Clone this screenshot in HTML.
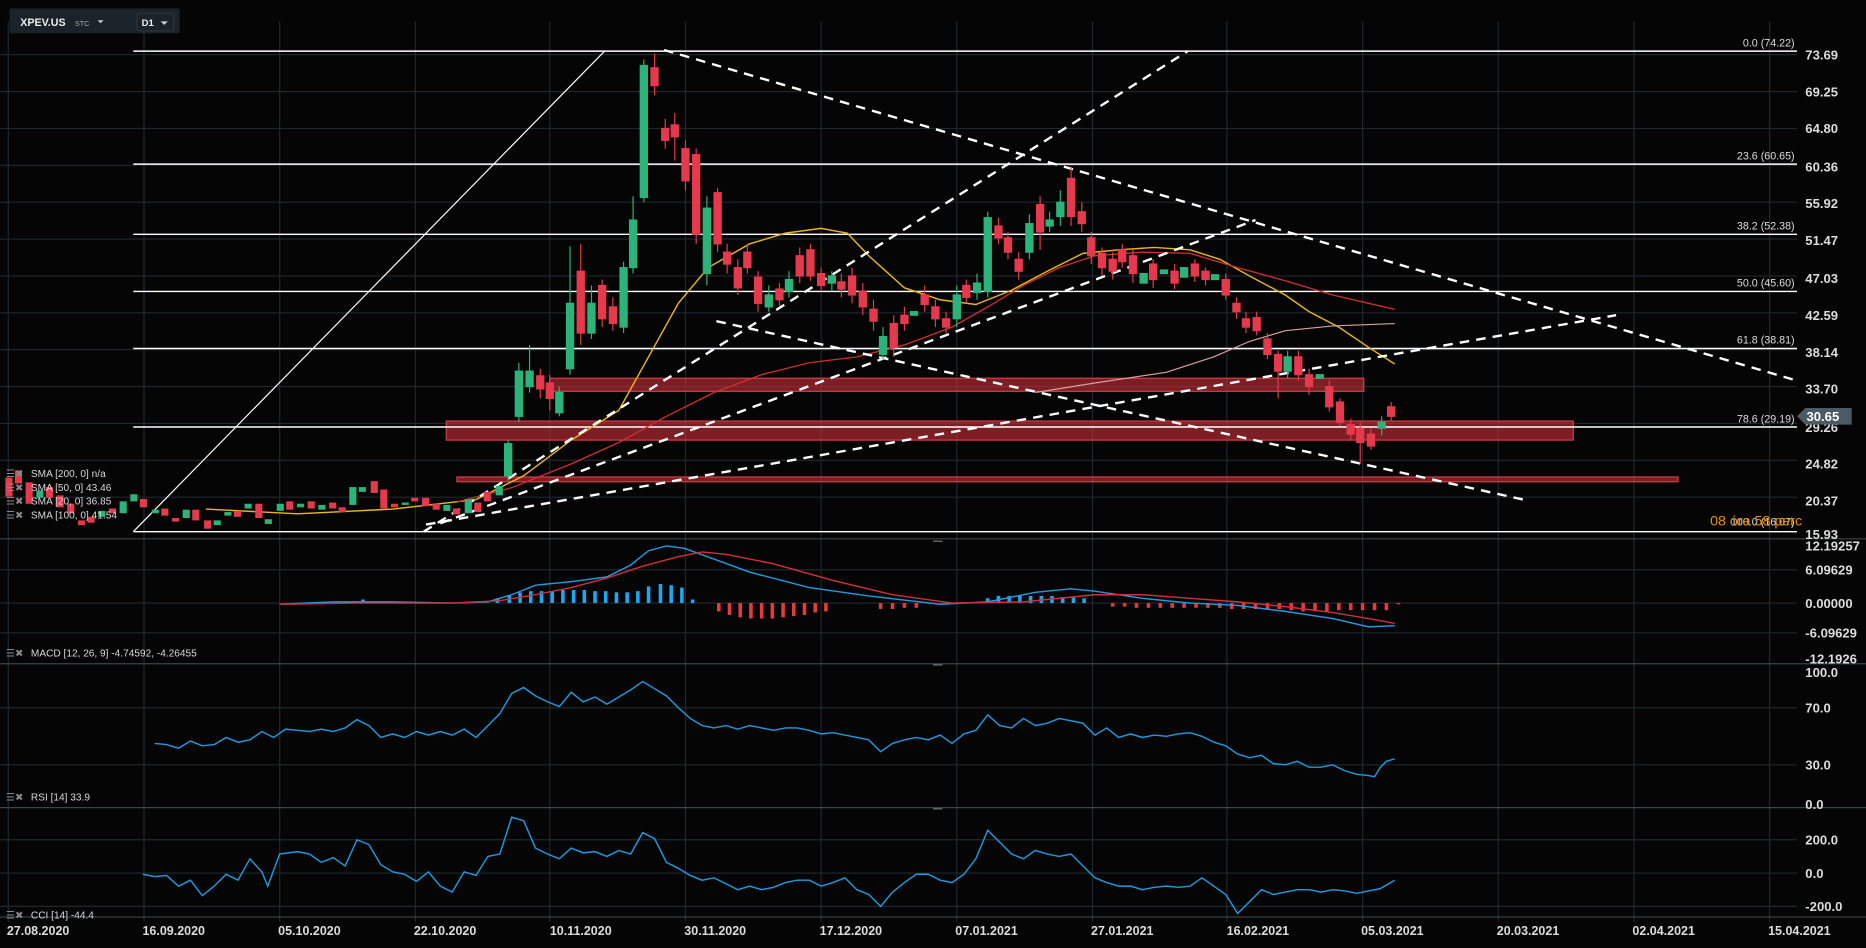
<!DOCTYPE html>
<html><head><meta charset="utf-8"><style>
html,body{margin:0;padding:0;background:#050505;overflow:hidden}
svg{display:block}
text{font-family:"Liberation Sans",sans-serif}
</style></head><body>
<svg width="1866" height="948" viewBox="0 0 1568 797" preserveAspectRatio="none" xmlns="http://www.w3.org/2000/svg">
<rect width="1568" height="797" fill="#050505"/>
<!-- grid -->
<g stroke="#1f282e" stroke-width="1">
<line x1="7" y1="18" x2="7" y2="775"/><line x1="121" y1="18" x2="121" y2="775"/><line x1="235" y1="18" x2="235" y2="775"/><line x1="349" y1="18" x2="349" y2="775"/><line x1="462" y1="18" x2="462" y2="775"/><line x1="576" y1="18" x2="576" y2="775"/><line x1="690" y1="18" x2="690" y2="775"/><line x1="804" y1="18" x2="804" y2="775"/><line x1="918" y1="18" x2="918" y2="775"/><line x1="1031" y1="18" x2="1031" y2="775"/><line x1="1145" y1="18" x2="1145" y2="775"/><line x1="1259" y1="18" x2="1259" y2="775"/><line x1="1373" y1="18" x2="1373" y2="775"/><line x1="1487" y1="18" x2="1487" y2="775"/>
<line x1="0" y1="46" x2="1510" y2="46"/><line x1="0" y1="77" x2="1510" y2="77"/><line x1="0" y1="108" x2="1510" y2="108"/><line x1="0" y1="139" x2="1510" y2="139"/><line x1="0" y1="170" x2="1510" y2="170"/><line x1="0" y1="201" x2="1510" y2="201"/><line x1="0" y1="232" x2="1510" y2="232"/><line x1="0" y1="263" x2="1510" y2="263"/><line x1="0" y1="294" x2="1510" y2="294"/><line x1="0" y1="325" x2="1510" y2="325"/><line x1="0" y1="356" x2="1510" y2="356"/><line x1="0" y1="387" x2="1510" y2="387"/><line x1="0" y1="418" x2="1510" y2="418"/>
<line x1="0" y1="479" x2="1510" y2="479"/><line x1="0" y1="507" x2="1510" y2="507"/><line x1="0" y1="532" x2="1510" y2="532"/>
<line x1="0" y1="595" x2="1510" y2="595"/><line x1="0" y1="643" x2="1510" y2="643"/>
<line x1="0" y1="706" x2="1510" y2="706"/><line x1="0" y1="734" x2="1510" y2="734"/><line x1="0" y1="762" x2="1510" y2="762"/>
</g>
<g stroke="#3a454c" stroke-width="1">
<line x1="0" y1="453" x2="1568" y2="453"/><line x1="0" y1="558" x2="1568" y2="558"/><line x1="0" y1="679" x2="1568" y2="679"/><line x1="0" y1="771" x2="1568" y2="771"/>
</g>
<!-- red zones -->
<g fill="rgba(190,45,55,0.65)" stroke="#d0404a" stroke-width="1">
<rect x="462" y="318" width="684" height="11"/>
<rect x="375" y="354" width="947" height="16"/>
<rect x="384" y="401" width="1026" height="4"/>
</g>
<!-- fib lines -->
<g stroke="#fff" stroke-width="1.2">
<line x1="112" y1="43" x2="1510" y2="43"/><line x1="112" y1="138" x2="1510" y2="138"/><line x1="112" y1="197" x2="1510" y2="197"/><line x1="112" y1="245" x2="1510" y2="245"/><line x1="112" y1="293" x2="1510" y2="293"/><line x1="112" y1="359" x2="1510" y2="359"/><line x1="112" y1="447" x2="1510" y2="447"/>
<line x1="112" y1="447" x2="508" y2="43" stroke-width="1"/>
</g>
<g fill="#ddd" font-size="9" text-anchor="end" font-family="DejaVu Sans,sans-serif">
<text x="1508" y="39">0.0 (74.22)</text><text x="1508" y="134">23.6 (60.65)</text><text x="1508" y="193">38.2 (52.38)</text><text x="1508" y="241">50.0 (45.60)</text><text x="1508" y="289">61.8 (38.81)</text><text x="1508" y="355">78.6 (29.19)</text><text x="1508" y="442">100.0 (16.07)</text>
</g>
<text x="1437" y="442" fill="#f08a00" font-size="12">08 óra 58 perc</text>
<!-- MAs -->
<polyline fill="none" stroke="#e8b420" stroke-width="1.2" points="173,428 250,432 330,428 400,420 440,400 480,370 520,345 545,300 570,255 595,225 630,205 660,196 690,192 712,196 730,215 760,242 790,252 820,256 850,244 880,228 910,213 940,210 970,208 1000,210 1025,218 1050,232 1080,248 1100,262 1125,275 1150,292 1172,306"/>
<polyline fill="none" stroke="#d02f2f" stroke-width="1.1" points="384,422 430,410 480,390 520,372 560,350 600,330 640,315 680,305 720,300 760,290 800,275 830,258 860,240 890,225 920,215 960,212 1000,213 1040,225 1080,236 1120,248 1150,255 1172,260"/>
<polyline fill="none" stroke="#d9a0a0" stroke-width="1" points="870,330 920,322 980,313 1020,300 1050,287 1080,278 1120,274 1172,272"/>
<!-- dashed lines -->
<g stroke="#fff" stroke-width="2" stroke-dasharray="8,6" fill="none">
<line x1="558" y1="42" x2="1510" y2="320"/>
<line x1="356" y1="447" x2="998" y2="43"/>
<line x1="358" y1="441" x2="1358" y2="265"/>
<line x1="370" y1="440" x2="1055" y2="185"/>
<line x1="602" y1="270" x2="1280" y2="420"/>
</g>
<!-- candles -->
<g stroke-width="1">
<g fill="#2bb37a" stroke="#2bb37a">
<rect x="31" y="413" width="5" height="5"/><rect x="83" y="430" width="5" height="4"/><rect x="101" y="422" width="5" height="9"/><rect x="110" y="416" width="5" height="5"/><rect x="128" y="429" width="5" height="2"/><rect x="154" y="429" width="5" height="6"/><rect x="180" y="438" width="5" height="3"/><rect x="189" y="431" width="5" height="2"/><rect x="206" y="424" width="5" height="3"/><rect x="223" y="437" width="5" height="3"/><rect x="233" y="424" width="5" height="5"/><rect x="250" y="424" width="5" height="2"/><rect x="268" y="425" width="5" height="3"/><rect x="294" y="410" width="5" height="14"/><rect x="302" y="410" width="5" height="3"/><rect x="338" y="423" width="5" height="1"/><rect x="373" y="425" width="5" height="4"/><rect x="391" y="420" width="5" height="11"/><rect x="417" y="409" width="5" height="7"/>
<line x1="427" y1="370" x2="427" y2="404"/><rect x="424" y="373" width="6" height="27"/>
<line x1="436" y1="305" x2="436" y2="355"/><rect x="433" y="312" width="6" height="38"/>
<line x1="445" y1="290" x2="445" y2="330"/><rect x="442" y="312" width="6" height="13"/>
<line x1="470" y1="325" x2="470" y2="350"/><rect x="467" y="330" width="6" height="17"/>
<line x1="479" y1="207" x2="479" y2="315"/><rect x="476" y="255" width="6" height="55"/>
<line x1="497" y1="240" x2="497" y2="285"/><rect x="494" y="255" width="6" height="25"/>
<line x1="524" y1="220" x2="524" y2="280"/><rect x="521" y="225" width="6" height="50"/>
<line x1="532" y1="165" x2="532" y2="230"/><rect x="529" y="185" width="6" height="40"/>
<line x1="541" y1="50" x2="541" y2="170"/><rect x="538" y="55" width="6" height="111"/>
<line x1="594" y1="165" x2="594" y2="240"/><rect x="591" y="175" width="6" height="55"/>
<line x1="646" y1="240" x2="646" y2="262"/><rect x="643" y="248" width="6" height="10"/>
<line x1="663" y1="228" x2="663" y2="250"/><rect x="660" y="235" width="6" height="10"/>
<line x1="699" y1="228" x2="699" y2="245"/><rect x="696" y="232" width="6" height="6"/>
<line x1="742" y1="275" x2="742" y2="302"/><rect x="739" y="283" width="6" height="15"/>
<rect x="765" y="262" width="6" height="3"/>
<line x1="804" y1="240" x2="804" y2="275"/><rect x="801" y="248" width="6" height="20"/>
<line x1="821" y1="230" x2="821" y2="252"/><rect x="818" y="238" width="6" height="8"/>
<line x1="830" y1="178" x2="830" y2="250"/><rect x="827" y="183" width="6" height="62"/>
<line x1="865" y1="180" x2="865" y2="218"/><rect x="862" y="188" width="6" height="24"/>
<line x1="882" y1="178" x2="882" y2="195"/><rect x="879" y="185" width="6" height="5"/>
<line x1="891" y1="160" x2="891" y2="190"/><rect x="888" y="170" width="6" height="12"/>
<rect x="958" y="230" width="6" height="8"/><rect x="975" y="227" width="6" height="3"/><rect x="992" y="225" width="6" height="8"/><rect x="1018" y="231" width="6" height="4"/>
<line x1="1082" y1="295" x2="1082" y2="318"/><rect x="1079" y="300" width="6" height="12"/>
<rect x="1106" y="315" width="6" height="3"/>
<line x1="1161" y1="350" x2="1161" y2="366"/><rect x="1158" y="355" width="6" height="5"/>
</g>
<g fill="#e5394d" stroke="#e5394d">
<rect x="5" y="402" width="5" height="15"/><rect x="13" y="396" width="5" height="10"/><rect x="22" y="406" width="5" height="17"/><rect x="39" y="410" width="5" height="8"/><rect x="48" y="417" width="5" height="9"/><rect x="57" y="424" width="5" height="7"/><rect x="66" y="438" width="5" height="3"/><rect x="74" y="435" width="5" height="4"/><rect x="92" y="428" width="5" height="3"/><rect x="118" y="420" width="5" height="6"/><rect x="136" y="428" width="5" height="5"/><rect x="145" y="436" width="5" height="2"/><rect x="162" y="429" width="5" height="8"/><rect x="172" y="438" width="5" height="6"/><rect x="197" y="430" width="5" height="4"/><rect x="215" y="424" width="5" height="11"/><rect x="241" y="422" width="5" height="6"/><rect x="259" y="422" width="5" height="5"/><rect x="277" y="423" width="5" height="4"/><rect x="285" y="427" width="5" height="3"/><rect x="312" y="405" width="5" height="9"/><rect x="320" y="412" width="5" height="15"/><rect x="329" y="424" width="5" height="2"/><rect x="346" y="419" width="5" height="2"/><rect x="355" y="419" width="5" height="6"/><rect x="364" y="424" width="5" height="4"/><rect x="381" y="428" width="5" height="4"/><rect x="399" y="423" width="5" height="7"/><rect x="407" y="414" width="5" height="7"/>
<line x1="454" y1="310" x2="454" y2="335"/><rect x="451" y="316" width="6" height="11"/>
<line x1="462" y1="315" x2="462" y2="345"/><rect x="459" y="322" width="6" height="13"/>
<line x1="488" y1="205" x2="488" y2="290"/><rect x="485" y="228" width="6" height="52"/>
<line x1="506" y1="235" x2="506" y2="275"/><rect x="503" y="240" width="6" height="28"/>
<line x1="515" y1="250" x2="515" y2="278"/><rect x="512" y="258" width="6" height="14"/>
<line x1="550" y1="45" x2="550" y2="80"/><rect x="547" y="57" width="6" height="15"/>
<line x1="559" y1="100" x2="559" y2="125"/><rect x="556" y="108" width="6" height="10"/>
<line x1="567" y1="95" x2="567" y2="135"/><rect x="564" y="105" width="6" height="10"/>
<line x1="576" y1="118" x2="576" y2="160"/><rect x="573" y="125" width="6" height="27"/>
<line x1="585" y1="125" x2="585" y2="205"/><rect x="582" y="130" width="6" height="67"/>
<line x1="603" y1="158" x2="603" y2="212"/><rect x="600" y="162" width="6" height="43"/>
<line x1="611" y1="205" x2="611" y2="230"/><rect x="608" y="212" width="6" height="10"/>
<line x1="620" y1="218" x2="620" y2="248"/><rect x="617" y="225" width="6" height="17"/>
<line x1="628" y1="205" x2="628" y2="230"/><rect x="625" y="212" width="6" height="13"/>
<line x1="637" y1="228" x2="637" y2="262"/><rect x="634" y="233" width="6" height="22"/>
<line x1="655" y1="238" x2="655" y2="258"/><rect x="652" y="243" width="6" height="9"/>
<line x1="672" y1="208" x2="672" y2="238"/><rect x="669" y="215" width="6" height="17"/>
<line x1="681" y1="205" x2="681" y2="236"/><rect x="678" y="210" width="6" height="22"/>
<line x1="690" y1="225" x2="690" y2="245"/><rect x="687" y="230" width="6" height="10"/>
<line x1="707" y1="230" x2="707" y2="250"/><rect x="704" y="237" width="6" height="6"/>
<line x1="716" y1="225" x2="716" y2="255"/><rect x="713" y="232" width="6" height="16"/>
<line x1="725" y1="238" x2="725" y2="265"/><rect x="722" y="245" width="6" height="13"/>
<line x1="734" y1="252" x2="734" y2="278"/><rect x="731" y="260" width="6" height="10"/>
<line x1="751" y1="265" x2="751" y2="300"/><rect x="748" y="272" width="6" height="20"/>
<line x1="760" y1="258" x2="760" y2="278"/><rect x="757" y="265" width="6" height="7"/>
<line x1="777" y1="240" x2="777" y2="262"/><rect x="774" y="248" width="6" height="8"/>
<line x1="786" y1="252" x2="786" y2="275"/><rect x="783" y="258" width="6" height="10"/>
<line x1="795" y1="262" x2="795" y2="280"/><rect x="792" y="268" width="6" height="7"/>
<line x1="812" y1="235" x2="812" y2="255"/><rect x="809" y="240" width="6" height="10"/>
<line x1="839" y1="183" x2="839" y2="205"/><rect x="836" y="190" width="6" height="10"/>
<line x1="847" y1="195" x2="847" y2="218"/><rect x="844" y="200" width="6" height="12"/>
<line x1="856" y1="212" x2="856" y2="235"/><rect x="853" y="218" width="6" height="10"/>
<line x1="874" y1="165" x2="874" y2="210"/><rect x="871" y="172" width="6" height="23"/>
<line x1="900" y1="140" x2="900" y2="190"/><rect x="897" y="150" width="6" height="32"/>
<line x1="909" y1="170" x2="909" y2="195"/><rect x="906" y="178" width="6" height="10"/>
<line x1="917" y1="195" x2="917" y2="222"/><rect x="914" y="200" width="6" height="15"/>
<line x1="926" y1="208" x2="926" y2="232"/><rect x="923" y="213" width="6" height="12"/>
<line x1="935" y1="212" x2="935" y2="235"/><rect x="932" y="218" width="6" height="10"/>
<line x1="943" y1="205" x2="943" y2="225"/><rect x="940" y="210" width="6" height="10"/>
<line x1="952" y1="210" x2="952" y2="238"/><rect x="949" y="215" width="6" height="15"/>
<line x1="969" y1="218" x2="969" y2="242"/><rect x="966" y="222" width="6" height="13"/>
<line x1="987" y1="222" x2="987" y2="243"/><rect x="984" y="228" width="6" height="10"/>
<line x1="1004" y1="218" x2="1004" y2="237"/><rect x="1001" y="222" width="6" height="10"/>
<line x1="1013" y1="225" x2="1013" y2="240"/><rect x="1010" y="228" width="6" height="7"/>
<line x1="1030" y1="230" x2="1030" y2="252"/><rect x="1027" y="235" width="6" height="13"/>
<line x1="1039" y1="250" x2="1039" y2="268"/><rect x="1036" y="255" width="6" height="7"/>
<line x1="1047" y1="262" x2="1047" y2="280"/><rect x="1044" y="268" width="6" height="7"/>
<line x1="1056" y1="262" x2="1056" y2="282"/><rect x="1053" y="267" width="6" height="11"/>
<line x1="1065" y1="280" x2="1065" y2="302"/><rect x="1062" y="285" width="6" height="13"/>
<line x1="1074" y1="295" x2="1074" y2="335"/><rect x="1071" y="298" width="6" height="14"/>
<line x1="1091" y1="295" x2="1091" y2="320"/><rect x="1088" y="300" width="6" height="15"/>
<line x1="1100" y1="310" x2="1100" y2="332"/><rect x="1097" y="315" width="6" height="10"/>
<line x1="1117" y1="320" x2="1117" y2="346"/><rect x="1114" y="325" width="6" height="17"/>
<line x1="1126" y1="335" x2="1126" y2="358"/><rect x="1123" y="338" width="6" height="17"/>
<line x1="1135" y1="352" x2="1135" y2="370"/><rect x="1132" y="357" width="6" height="8"/>
<line x1="1143" y1="355" x2="1143" y2="390"/><rect x="1140" y="360" width="6" height="12"/>
<line x1="1152" y1="360" x2="1152" y2="378"/><rect x="1149" y="365" width="6" height="10"/>
<line x1="1169" y1="338" x2="1169" y2="354"/><rect x="1166" y="342" width="6" height="8"/>
</g>
</g>
<!-- MACD -->
<g stroke="#1ea6f0" stroke-width="3">
<line x1="305" y1="507" x2="305" y2="504"/><line x1="418" y1="507" x2="418" y2="503"/><line x1="428" y1="507" x2="428" y2="501"/><line x1="437" y1="507" x2="437" y2="498"/><line x1="446" y1="507" x2="446" y2="497"/><line x1="455" y1="507" x2="455" y2="497"/><line x1="464" y1="507" x2="464" y2="497"/><line x1="473" y1="507" x2="473" y2="496"/><line x1="482" y1="507" x2="482" y2="496"/><line x1="491" y1="507" x2="491" y2="496"/><line x1="500" y1="507" x2="500" y2="497"/><line x1="509" y1="507" x2="509" y2="497"/><line x1="518" y1="507" x2="518" y2="498"/><line x1="527" y1="507" x2="527" y2="498"/><line x1="536" y1="507" x2="536" y2="497"/><line x1="545" y1="507" x2="545" y2="493"/><line x1="555" y1="507" x2="555" y2="491"/><line x1="564" y1="507" x2="564" y2="492"/><line x1="573" y1="507" x2="573" y2="494"/><line x1="582" y1="507" x2="582" y2="504"/>
<line x1="830" y1="507" x2="830" y2="503"/><line x1="839" y1="507" x2="839" y2="501"/><line x1="848" y1="507" x2="848" y2="501"/><line x1="857" y1="507" x2="857" y2="501"/><line x1="866" y1="507" x2="866" y2="501"/><line x1="875" y1="507" x2="875" y2="501"/><line x1="884" y1="507" x2="884" y2="501"/><line x1="893" y1="507" x2="893" y2="502"/><line x1="902" y1="507" x2="902" y2="502"/><line x1="911" y1="507" x2="911" y2="503"/>
</g>
<g stroke="#e5393d" stroke-width="3">
<line x1="604" y1="507" x2="604" y2="514"/><line x1="613" y1="507" x2="613" y2="517"/><line x1="622" y1="507" x2="622" y2="519"/><line x1="631" y1="507" x2="631" y2="520"/><line x1="640" y1="507" x2="640" y2="520"/><line x1="649" y1="507" x2="649" y2="520"/><line x1="658" y1="507" x2="658" y2="519"/><line x1="667" y1="507" x2="667" y2="518"/><line x1="676" y1="507" x2="676" y2="517"/><line x1="685" y1="507" x2="685" y2="515"/><line x1="694" y1="507" x2="694" y2="514"/><line x1="740" y1="507" x2="740" y2="512"/><line x1="750" y1="507" x2="750" y2="512"/><line x1="760" y1="507" x2="760" y2="511"/><line x1="770" y1="507" x2="770" y2="511"/>
<line x1="935" y1="507" x2="935" y2="510"/><line x1="945" y1="507" x2="945" y2="510"/><line x1="955" y1="507" x2="955" y2="511"/><line x1="965" y1="507" x2="965" y2="511"/><line x1="975" y1="507" x2="975" y2="511"/><line x1="985" y1="507" x2="985" y2="511"/><line x1="995" y1="507" x2="995" y2="511"/><line x1="1005" y1="507" x2="1005" y2="511"/><line x1="1015" y1="507" x2="1015" y2="511"/><line x1="1025" y1="507" x2="1025" y2="511"/><line x1="1035" y1="507" x2="1035" y2="512"/><line x1="1045" y1="507" x2="1045" y2="512"/><line x1="1055" y1="507" x2="1055" y2="512"/><line x1="1065" y1="507" x2="1065" y2="512"/><line x1="1075" y1="507" x2="1075" y2="512"/><line x1="1085" y1="507" x2="1085" y2="513"/><line x1="1095" y1="507" x2="1095" y2="514"/><line x1="1105" y1="507" x2="1105" y2="514"/><line x1="1115" y1="507" x2="1115" y2="514"/><line x1="1125" y1="507" x2="1125" y2="513"/><line x1="1135" y1="507" x2="1135" y2="513"/><line x1="1145" y1="507" x2="1145" y2="513"/><line x1="1155" y1="507" x2="1155" y2="513"/><line x1="1165" y1="507" x2="1165" y2="513"/><line x1="1175" y1="507" x2="1175" y2="508"/>
</g>
<polyline fill="none" stroke="#1e9be0" stroke-width="1.2" points="235,508 280,506 330,506 380,507 410,506 430,500 450,492 480,489 510,485 530,475 545,463 560,459 575,461 600,470 630,481 680,494 730,501 790,508 830,506 870,498 900,495 920,497 960,503 1000,507 1040,509 1080,514 1120,520 1150,527 1172,526"/>
<polyline fill="none" stroke="#d0303a" stroke-width="1.2" points="235,508 300,507 380,507 420,505 450,500 480,494 510,486 540,476 570,468 590,464 610,466 650,474 700,488 750,500 800,507 860,506 920,500 960,500 1000,503 1040,506 1080,510 1120,515 1150,520 1172,524"/>
<!-- RSI -->
<polyline fill="none" stroke="#1e9be0" stroke-width="1.2" points="130,625 140,626 150,629 160,623 170,627 180,626 190,620 200,624 210,622 220,615 230,620 240,613 250,614 260,615 270,613 280,615 290,612 300,605 310,610 320,620 330,617 340,620 350,615 360,618 370,615 380,618 390,613 400,620 410,610 420,600 430,583 440,578 450,585 460,590 470,594 480,582 490,590 500,586 510,592 520,586 530,580 540,573 550,579 560,585 570,595 580,604 590,610 600,612 610,610 620,613 630,610 640,612 650,614 660,612 670,612 680,614 690,617 700,616 710,618 720,620 730,622 740,632 750,625 760,622 770,620 780,622 790,618 800,625 810,617 820,614 830,601 840,610 850,612 860,604 870,610 880,608 890,604 900,606 910,608 920,618 930,612 940,620 950,617 960,620 970,618 980,619 990,617 1000,616 1010,619 1020,624 1030,627 1040,634 1050,637 1060,635 1070,642 1080,643 1090,640 1100,645 1110,645 1120,643 1130,648 1140,651 1150,652 1155,653 1160,645 1165,640 1172,638"/>
<!-- CCI -->
<polyline fill="none" stroke="#1e9be0" stroke-width="1.2" points="120,735 130,737 140,736 150,745 160,740 170,753 180,745 190,735 200,740 210,722 220,733 225,745 235,718 250,716 260,718 270,725 280,721 290,728 300,706 310,710 320,727 330,733 340,735 350,741 360,733 370,745 380,750 390,733 400,736 410,720 420,718 430,687 440,690 450,713 460,718 470,722 480,713 490,717 500,716 510,720 520,715 530,718 540,700 550,705 560,725 570,730 580,736 590,740 600,738 610,743 620,748 630,745 640,748 650,746 660,742 670,740 680,740 690,745 700,742 710,738 720,748 730,752 740,762 750,750 760,742 770,735 780,735 790,740 800,742 810,735 820,722 830,698 840,708 850,718 860,722 870,715 880,718 890,720 900,718 910,728 920,738 930,742 940,745 950,745 960,748 970,746 980,745 990,746 1000,745 1010,738 1020,745 1030,752 1040,768 1050,758 1060,748 1070,752 1080,750 1090,748 1100,748 1110,750 1120,748 1130,749 1140,751 1150,749 1160,747 1172,740"/>
<!-- axis labels -->
<g fill="#dcdcdc" font-size="11" font-weight="bold">
<text x="1517" y="50">73.69</text><text x="1517" y="81">69.25</text><text x="1517" y="112">64.80</text><text x="1517" y="144">60.36</text><text x="1517" y="175">55.92</text><text x="1517" y="206">51.47</text><text x="1517" y="238">47.03</text><text x="1517" y="269">42.59</text><text x="1517" y="300">38.14</text><text x="1517" y="331">33.70</text><text x="1517" y="363">29.26</text><text x="1517" y="394">24.82</text><text x="1517" y="425">20.37</text><text x="1517" y="453">15.93</text>
<text x="1517" y="463">12.19257</text><text x="1517" y="483">6.09629</text><text x="1517" y="511">0.00000</text><text x="1517" y="536">-6.09629</text><text x="1517" y="558">-12.1926</text>
<text x="1517" y="569">100.0</text><text x="1517" y="599">70.0</text><text x="1517" y="647">30.0</text><text x="1517" y="680">0.0</text>
<text x="1517" y="710">200.0</text><text x="1517" y="738">0.0</text><text x="1517" y="766">-200.0</text>
</g>
<path d="M1510,350 L1517,343 L1556,343 L1556,357 L1517,357 Z" fill="#4b5a63"/>
<text x="1518" y="354" fill="#fff" font-size="11" font-weight="bold">30.65</text>
<g fill="#dcdcdc" font-size="10.5" font-weight="bold" text-anchor="middle">
<text x="32" y="786">27.08.2020</text><text x="146" y="786">16.09.2020</text><text x="260" y="786">05.10.2020</text><text x="374" y="786">22.10.2020</text><text x="488" y="786">10.11.2020</text><text x="601" y="786">30.11.2020</text><text x="715" y="786">17.12.2020</text><text x="829" y="786">07.01.2021</text><text x="943" y="786">27.01.2021</text><text x="1057" y="786">16.02.2021</text><text x="1170" y="786">05.03.2021</text><text x="1284" y="786">20.03.2021</text><text x="1398" y="786">02.04.2021</text><text x="1512" y="786">15.04.2021</text>
</g>
<g stroke="#777" stroke-width="1"><line x1="784" y1="455" x2="792" y2="455"/><line x1="784" y1="559" x2="792" y2="559"/><line x1="784" y1="680" x2="792" y2="680"/></g>
<!-- legends -->
<g fill="#d8d8d8" font-size="8.5">
<text x="26" y="401">SMA [200, 0] n/a</text><text x="26" y="413">SMA [50, 0] 43.46</text><text x="26" y="424">SMA [20, 0] 36.85</text><text x="26" y="436">SMA [100, 0] 41.54</text>
<text x="26" y="552">MACD [12, 26, 9] -4.74592, -4.26455</text>
<text x="26" y="673">RSI [14] 33.9</text>
<text x="26" y="772">CCI [14] -44.4</text>
</g>
<g fill="#888" font-size="8.5"><text x="5" y="401">☰✖</text><text x="5" y="413">☰✖</text><text x="5" y="424">☰✖</text><text x="5" y="436">☰✖</text><text x="5" y="552">☰✖</text><text x="5" y="673">☰✖</text><text x="5" y="772">☰✖</text></g>
<!-- header -->
<rect x="8" y="7" width="143" height="21" rx="2" fill="#1a2329"/>
<text x="17" y="22" fill="#eee" font-size="9" font-weight="bold">XPEV.US</text>
<text x="63" y="22" fill="#aaa" font-size="6">STC</text>
<path d="M82,17 L87,17 L84.5,19.5 Z" fill="#ccc"/>
<rect x="115" y="11" width="31" height="15" rx="2" fill="none" stroke="#2c363c"/>
<text x="119" y="22" fill="#eee" font-size="8" font-weight="bold">D1</text>
<path d="M135,18 L141,18 L138,21 Z" fill="#ccc"/>
</svg>
</body></html>
